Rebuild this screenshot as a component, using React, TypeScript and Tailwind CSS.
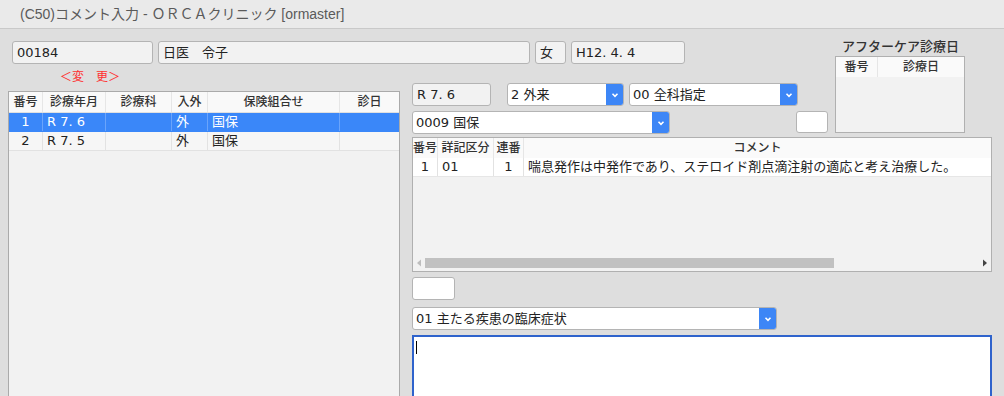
import { ReactNode } from "react";

const FONT = { fontFamily: '"DejaVu Sans", "Noto Sans CJK JP", sans-serif' };

function Chevron() {
  return (
    <svg width="10" height="10" viewBox="0 0 10 10">
      <path d="M2.5 3.8l2.5 2.5 2.5-2.5" fill="none" stroke="white" strokeWidth="1.6" />
    </svg>
  );
}

function Field({ w, children, white }: { w: string; children?: ReactNode; white?: boolean }) {
  return (
    <div
      className={`${w} h-[23px] flex items-center px-[4px] rounded-[3px] border border-[#b4b4b4] text-[13px] text-[#222] ${
        white ? "bg-white" : "bg-[#f2f2f2]"
      }`}
    >
      {children}
    </div>
  );
}

function Select({ w, label }: { w: string; label: string }) {
  return (
    <div className={`${w} h-[23px] flex rounded-[3px] border border-[#b4b4b4] bg-white overflow-hidden`}>
      <div className="flex-1 flex items-center px-[3px] text-[13px] text-[#222]">{label}</div>
      <div className="w-[18px] -my-px -mr-px bg-[#3d86f6] rounded-r-[3px] flex items-center justify-center">
        <Chevron />
      </div>
    </div>
  );
}

const leftCols = "grid grid-cols-[34px_63px_66px_36px_132px_1fr]";
const commentCols = "grid grid-cols-[25px_56px_30px_1fr]";

function HeadCell({ children, last }: { children?: ReactNode; last?: boolean }) {
  return (
    <div
      className={`h-[20px] flex items-center justify-center text-[12px] text-[#333] font-medium ${
        last ? "" : "border-r border-[#e6e6e6]"
      }`}
    >
      {children}
    </div>
  );
}

function Cell({
  children,
  center,
  sel,
  last,
}: {
  children?: ReactNode;
  center?: boolean;
  sel?: boolean;
  last?: boolean;
}) {
  return (
    <div
      className={`h-[18px] flex items-center text-[13px] ${center ? "justify-center" : "px-[4px]"} ${
        last ? "" : sel ? "border-r border-[#6aa4fb]" : "border-r border-[#e2e2e2]"
      }`}
    >
      {children}
    </div>
  );
}

const visits = [
  { no: "1", ym: "R 7. 6", io: "外", ins: "国保", sel: true },
  { no: "2", ym: "R 7. 5", io: "外", ins: "国保", sel: false },
];

export default function App() {
  return (
    <div className="w-[1004px] h-[396px] overflow-hidden bg-[#dedede]" style={FONT}>
      <header className="h-[29px] bg-[#eaeaea] border-b border-[#c9c9c9] flex items-center pl-[20px]">
        <span
          className="text-[14px] text-[#5a5a5a]"
          style={{ fontFamily: '"Liberation Sans", "Noto Sans CJK JP", sans-serif' }}
        >
          (C50)コメント入力 - ＯＲＣＡクリニック [ormaster]
        </span>
      </header>

      <div className="grid grid-cols-[392px_12px_423px_129px_27px] grid-rows-[26px_69px_1fr] pl-[8px] pt-[9px] h-[367px]">
        {/* patient row */}
        <div className="col-start-1 col-span-3 row-start-1 flex items-start gap-[5px] pl-[4px] pt-[3px]">
          <Field w="w-[141px]">00184</Field>
          <Field w="w-[372px]">日医　令子</Field>
          <Field w="w-[31px]">女</Field>
          <Field w="w-[114px]">H12. 4. 4</Field>
        </div>

        {/* aftercare */}
        <div className="col-start-4 row-start-1 row-span-2 flex flex-col">
          <div className="h-[18px] flex items-center justify-center text-[13px] text-[#333] font-medium pl-[2px]">
            アフターケア診療日
          </div>
          <div className="w-[130px] h-[77px] border border-[#b0b0b0] bg-[#f2f2f2]">
            <div className="grid grid-cols-[42px_1fr] bg-[#fafafa]">
              <HeadCell>番号</HeadCell>
              <HeadCell last>診療日</HeadCell>
            </div>
          </div>
        </div>

        {/* visit list */}
        <div className="col-start-1 row-start-2 row-span-2 flex flex-col">
          <div className="h-[27px] pl-[52px] pt-[4px] text-[12px] text-[#ff3030]">＜変　更＞</div>
          <div className="flex-1 border border-[#aaaaaa] bg-[#f2f2f2]">
            <div className={`${leftCols} bg-[#f9f9f9] border-b border-[#e0e0e0]`}>
              <HeadCell>番号</HeadCell>
              <HeadCell>診療年月</HeadCell>
              <HeadCell>診療科</HeadCell>
              <HeadCell>入外</HeadCell>
              <HeadCell>保険組合せ</HeadCell>
              <HeadCell last>診日</HeadCell>
            </div>
            {visits.map((v) => (
              <div
                key={v.no}
                className={`${leftCols} border-b ${
                  v.sel ? "bg-[#3a87f9] text-white border-[#3a87f9]" : "bg-[#f6f6f6] text-[#222] border-[#e2e2e2]"
                }`}
              >
                <Cell center sel={v.sel}>{v.no}</Cell>
                <Cell sel={v.sel}>{v.ym}</Cell>
                <Cell sel={v.sel} />
                <Cell sel={v.sel}>{v.io}</Cell>
                <Cell sel={v.sel}>{v.ins}</Cell>
                <Cell sel={v.sel} last />
              </div>
            ))}
          </div>
        </div>

        {/* visit detail controls */}
        <div className="col-start-3 row-start-2 flex flex-col gap-[5px] pt-[19px]">
          <div className="flex gap-[5px]">
            <Field w="w-[79px] mr-[11px]">R 7. 6</Field>
            <Select w="w-[117px]" label="2 外来" />
            <Select w="w-[169px]" label="00 全科指定" />
          </div>
          <div className="flex items-start">
            <Select w="w-[258px]" label="0009 国保" />
            <div className="ml-[126px] w-[32px] h-[22px] bg-white border border-[#b4b4b4] rounded-[3px]" />
          </div>
        </div>

        {/* comments */}
        <div className="col-start-3 col-span-3 row-start-3 flex flex-col pt-[4px] w-[580px]">
          <div className="h-[135px] border border-[#b0b0b0] bg-[#f2f2f2] flex flex-col">
            <div className={`${commentCols} bg-[#fafafa]`}>
              <HeadCell>番号</HeadCell>
              <HeadCell>詳記区分</HeadCell>
              <HeadCell>連番</HeadCell>
              <HeadCell last>コメント</HeadCell>
            </div>
            <div className={`${commentCols} bg-white text-[#222] border-b border-[#e6e6e6]`}>
              <Cell center>1</Cell>
              <Cell>01</Cell>
              <Cell center>1</Cell>
              <Cell last>喘息発作は中発作であり、ステロイド剤点滴注射の適応と考え治療した。</Cell>
            </div>
            <div className="flex-1" />
            <div className="h-[14px] flex items-center px-[3px] gap-[3px] mb-[1px]">
              <svg width="6" height="8" viewBox="0 0 6 8">
                <path d="M5 0.5v7L1 4z" fill="#bdbdbd" />
              </svg>
              <div className="w-[409px] h-[10px] bg-[#c1c1c1]" />
              <div className="flex-1" />
              <svg width="6" height="8" viewBox="0 0 6 8">
                <path d="M1 0.5v7L5 4z" fill="#444" />
              </svg>
            </div>
          </div>
          <div className="mt-[5px] w-[43px] h-[23px] bg-white border border-[#b4b4b4] rounded-[3px]" />
          <div className="mt-[7px]">
            <Select w="w-[365px]" label="01 主たる疾患の臨床症状" />
          </div>
          <div className="mt-[5px] flex-1 min-h-[70px] bg-white border-2 border-[#2f63cc] pl-[2px] pt-[4px]">
            <div className="w-px h-[13px] bg-black" />
          </div>
        </div>
      </div>
    </div>
  );
}
